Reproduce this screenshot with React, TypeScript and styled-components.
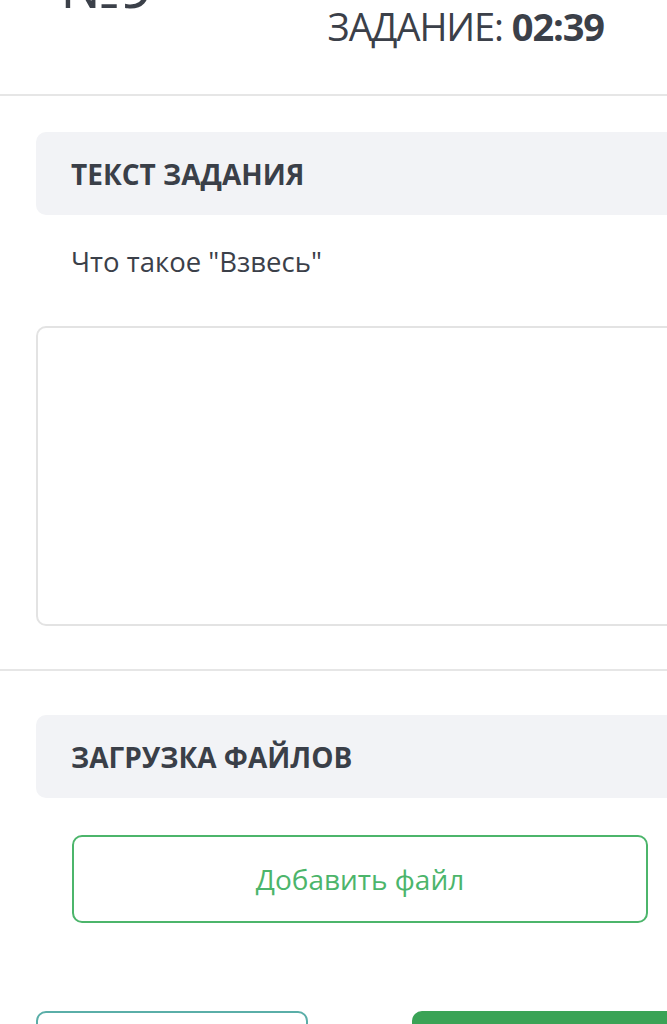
import * as React from "react";
import styled, { createGlobalStyle } from "styled-components";

const GlobalStyle = createGlobalStyle`
  html, body {
    margin: 0;
    padding: 0;
    background: #ffffff;
    overflow: hidden;
  }
  body {
    font-family: "Open Sans", "Liberation Sans", sans-serif;
    color: #3b4049;
  }
`;

const Page = styled.div`
  width: 720px;
  background: #ffffff;
`;

const Header = styled.header`
  display: flex;
  justify-content: space-between;
  align-items: flex-end;
  margin-top: -52px;
  padding: 0 116px 42px 60px;
  border-bottom: 2px solid #e6e6e6;
`;

const TaskNumber = styled.div`
  font-size: 60px;
  line-height: 1;
  color: #3b4049;
  align-self: flex-start;
  margin-top: 7px;
  letter-spacing: -2px;
`;

const Timer = styled.div`
  font-size: 38px;
  line-height: 52px;
  color: #3b4049;
  text-align: left;
  letter-spacing: -1.1px;
`;

const TimerValue = styled.b`
  font-weight: 700;
`;

const Section = styled.section<{ $top: number; $divider?: boolean }>`
  display: flex;
  flex-direction: column;
  padding: ${(p) => p.$top}px 36px ${(p) => (p.$divider ? 43 : 0)}px;
  border-bottom: ${(p) => (p.$divider ? "2px solid #e6e6e6" : "none")};
`;

const SectionTitle = styled.div`
  background: #f2f3f6;
  border-radius: 10px;
  height: 83px;
  display: flex;
  align-items: center;
  padding: 0 35px;
  font-size: 28px;
  font-weight: 700;
  color: #3a3f48;
`;

const TaskText = styled.p`
  margin: 0;
  padding: 28px 35px 0;
  font-size: 27.5px;
  line-height: 38px;
  color: #3b4049;
`;

const Answer = styled.textarea`
  margin-top: 45px;
  height: 300px;
  border: 2px solid #e3e3e3;
  border-radius: 10px;
  resize: none;
  box-sizing: border-box;
  outline: none;
  font-family: inherit;
  font-size: 27px;
`;

const UploadArea = styled.div`
  padding: 37px 72px 0;
`;

const AddFileButton = styled.button`
  width: 100%;
  height: 88px;
  box-sizing: border-box;
  background: #ffffff;
  border: 2px solid #4cb56b;
  border-radius: 10px;
  color: #4cb56b;
  font-family: inherit;
  font-size: 28px;
`;

const Actions = styled.div`
  display: flex;
  justify-content: space-between;
  padding: 88px 36px 0;
`;

const ActionButton = styled.button<{ $primary?: boolean }>`
  width: 272px;
  height: 88px;
  box-sizing: border-box;
  border-radius: 10px;
  border: 2px solid ${(p) => (p.$primary ? "#3aa356" : "#5aaea8")};
  background: ${(p) => (p.$primary ? "#3aa356" : "#ffffff")};
  color: ${(p) => (p.$primary ? "#ffffff" : "#5aaea8")};
  font-family: inherit;
  font-size: 28px;
`;

export default function App() {
  return (
    <Page>
      <GlobalStyle />
      <Header>
        <TaskNumber>№9</TaskNumber>
        <Timer>
          ОСТАЛОСЬ НА
          <br />
          ЗАДАНИЕ: <TimerValue>02:39</TimerValue>
        </Timer>
      </Header>
      <Section $top={36} $divider>
        <SectionTitle>ТЕКСТ ЗАДАНИЯ</SectionTitle>
        <TaskText>Что такое "Взвесь"</TaskText>
        <Answer />
      </Section>
      <Section $top={44}>
        <SectionTitle>ЗАГРУЗКА ФАЙЛОВ</SectionTitle>
      </Section>
      <UploadArea>
        <AddFileButton>Добавить файл</AddFileButton>
      </UploadArea>
      <Actions>
        <ActionButton>Назад</ActionButton>
        <ActionButton $primary>Ответить</ActionButton>
      </Actions>
    </Page>
  );
}
